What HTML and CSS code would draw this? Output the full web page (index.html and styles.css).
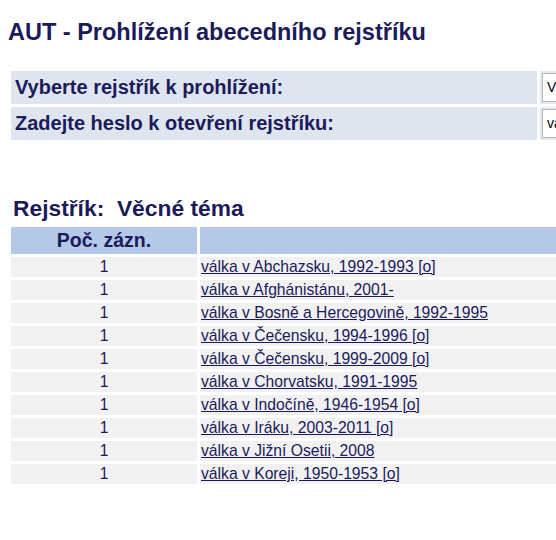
FILE: index.html
```html
<!DOCTYPE html>
<html lang="cs">
<head>
<meta charset="utf-8">
<title>AUT - Prohlížení abecedního rejstříku</title>
<link rel="stylesheet" href="styles.css">
</head>
<body>
<div class="page">
  <h1 class="title">AUT - Prohlížení abecedního rejstříku</h1>
  <table class="form">
    <tr>
      <th class="label">Vyberte rejstřík k prohlížení:</th>
      <td class="field"><span class="select">Věcné téma</span></td>
    </tr>
    <tr>
      <th class="label">Zadejte heslo k otevření rejstříku:</th>
      <td class="field"><span class="input">válka v</span></td>
    </tr>
  </table>
  <h2 class="subtitle">Rejstřík:&nbsp; Věcné téma</h2>
  <table class="list">
    <tr class="head">
      <th class="count">Poč. zázn.</th>
      <th class="term"></th>
    </tr>
    <tr><td class="count">1</td><td class="term"><a href="#">válka v Abchazsku, 1992-1993 [o]</a></td></tr>
    <tr><td class="count">1</td><td class="term"><a href="#">válka v Afghánistánu, 2001-</a></td></tr>
    <tr><td class="count">1</td><td class="term"><a href="#">válka v Bosně a Hercegovině, 1992-1995</a></td></tr>
    <tr><td class="count">1</td><td class="term"><a href="#">válka v Čečensku, 1994-1996 [o]</a></td></tr>
    <tr><td class="count">1</td><td class="term"><a href="#">válka v Čečensku, 1999-2009 [o]</a></td></tr>
    <tr><td class="count">1</td><td class="term"><a href="#">válka v Chorvatsku, 1991-1995</a></td></tr>
    <tr><td class="count">1</td><td class="term"><a href="#">válka v Indočíně, 1946-1954 [o]</a></td></tr>
    <tr><td class="count">1</td><td class="term"><a href="#">válka v Iráku, 2003-2011 [o]</a></td></tr>
    <tr><td class="count">1</td><td class="term"><a href="#">válka v Jižní Osetii, 2008</a></td></tr>
    <tr><td class="count">1</td><td class="term"><a href="#">válka v Koreji, 1950-1953 [o]</a></td></tr>
  </table>
</div>
</body>
</html>
```
FILE: styles.css
```css
html, body {
  margin: 0;
  padding: 0;
  background: #ffffff;
}
body {
  font-family: "Liberation Sans", Arial, sans-serif;
  color: #1b1b5c;
}
.page {
  width: 556px;
  height: 540px;
  overflow: hidden;
  padding: 0 0 0 8px;
  box-sizing: border-box;
}
.title {
  margin: 19px 0 0 0;
  font-size: 23.5px;
  line-height: 26px;
  font-weight: bold;
  white-space: nowrap;
}
.form {
  margin-top: 23px;
  border-spacing: 3px;
  border-collapse: separate;
  table-layout: fixed;
  width: 800px;
}
.form .label {
  width: 526px;
  height: 33px;
  padding: 0 0 0 4px;
  background: #dfe5ef;
  text-align: left;
  font-size: 20px;
  font-weight: bold;
  white-space: nowrap;
  box-sizing: border-box;
}
.form .field {
  background: #e4e8f0;
  padding: 2px;
  box-sizing: border-box;
  height: 33px;
}
.select, .input {
  display: block;
  height: 27px;
  line-height: 27px;
  background: #ffffff;
  border: 1px solid #b8b8b8;
  padding: 0 4px;
  font-size: 14px;
  color: #000000;
  white-space: nowrap;
}
.subtitle {
  margin: 52px 0 0 0;
  padding-left: 5px;
  font-size: 22.8px;
  line-height: 26px;
  font-weight: bold;
  white-space: nowrap;
}
.list {
  margin-top: 3px;
  border-spacing: 3px;
  border-collapse: separate;
  table-layout: fixed;
  width: 800px;
}
.list .count {
  width: 186px;
  text-align: center;
  padding: 0;
}
.list .head th {
  height: 27px;
  padding: 0;
  background: #b3c9e7;
  font-size: 19.5px;
  font-weight: bold;
}
.list td {
  height: 20px;
  padding: 0;
  background: #f1f1f1;
  font-size: 15.7px;
  line-height: 20px;
  white-space: nowrap;
}
.list td.term {
  padding-left: 1px;
}
.list a {
  color: #1b1b5c;
  text-decoration: underline;
}
```
